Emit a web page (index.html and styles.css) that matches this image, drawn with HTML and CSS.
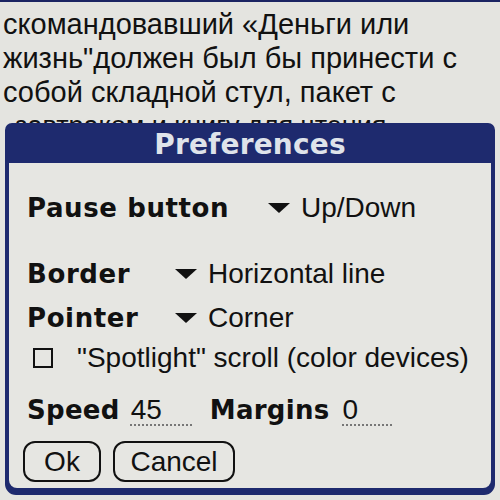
FILE: index.html
```html
<!DOCTYPE html>
<html lang="ru">
<head>
    <meta charset="UTF-8">
    <title>Preferences</title>
    <link rel="stylesheet" href="styles.css">
</head>
<body>

    <div class="reader">
        <p class="line">скомандовавший «Деньги или</p>
        <p class="line">жизнь"должен был бы принести с</p>
        <p class="line">собой складной стул, пакет с</p>
        <p class="line line-hidden">завтраком и книгу для чтения</p>
    </div>

    <div class="dialog">
        <div class="dialog-title">Preferences</div>
        <div class="dialog-body">

            <div class="row row-pause">
                <span class="label label-wide">Pause button</span>
                <span class="trigger"></span>
                <span class="value">Up/Down</span>
            </div>

            <div class="row row-border">
                <span class="label">Border</span>
                <span class="trigger"></span>
                <span class="value">Horizontal line</span>
            </div>

            <div class="row row-pointer">
                <span class="label">Pointer</span>
                <span class="trigger"></span>
                <span class="value">Corner</span>
            </div>

            <div class="row row-check">
                <span class="checkbox"></span>
                <span class="value">"Spotlight" scroll (color devices)</span>
            </div>

            <div class="row row-fields">
                <span class="label">Speed</span>
                <span class="field field-speed">45</span>
                <span class="label label-margins">Margins</span>
                <span class="field field-margins">0</span>
            </div>

            <div class="buttons">
                <button class="btn btn-ok">Ok</button>
                <button class="btn btn-cancel">Cancel</button>
            </div>

        </div>
    </div>

</body>
</html>
```

FILE: styles.css
```css
body {
    margin: 0;
    width: 500px;
    height: 500px;
    overflow: hidden;
    background-color: #e4e4e0;
    border-top: 2px solid #1b2462;
    box-sizing: border-box;
    font-family: "Liberation Sans", Arial, sans-serif;
    color: #111;
}
.reader {
    height: 123px;
    overflow: hidden;
    padding: 5px 0 0 3px;
    box-sizing: border-box;
}
.line {
    margin: 0;
    font-size: 29px;
    line-height: 34px;
    white-space: nowrap;
}
.line-hidden {
    padding-left: 12px;
    font-size: 27px;
}
.dialog {
    position: absolute;
    left: 5px;
    top: 123px;
    width: 490px;
    height: 372px;
    box-sizing: border-box;
    background: #1e2a6e;
    border-radius: 7px 7px 11px 11px;
    padding: 0 4px 7px 4px;
    display: flex;
    flex-direction: column;
}
.dialog-title {
    height: 40px;
    text-align: center;
    font-family: "DejaVu Sans", sans-serif;
    font-weight: bold;
    font-size: 28px;
    line-height: 43px;
    color: #dfe3ea;
    letter-spacing: 0.2px;
}
.dialog-body {
    flex: 1;
    background: #e6e6e2;
    border-radius: 0 0 8px 8px;
    padding: 0 0 0 18px;
}
.row {
    display: flex;
    align-items: center;
    height: 40px;
    white-space: nowrap;
}
.row-pause {
    margin-top: 25px;
}
.row-border {
    margin-top: 26px;
}
.row-pointer {
    margin-top: 4px;
}
.row-check {
    margin-top: 0;
}
.row-fields {
    margin-top: 12px;
}
.label {
    font-family: "DejaVu Sans", sans-serif;
    font-weight: bold;
    font-size: 26px;
    letter-spacing: 0.6px;
    width: 148px;
}
.label-wide {
    width: 241px;
}
.trigger {
    width: 0;
    height: 0;
    border-left: 11px solid transparent;
    border-right: 11px solid transparent;
    border-top: 10px solid #111;
    margin-right: 11px;
}
.value {
    font-size: 28px;
}
.checkbox {
    width: 16px;
    height: 16px;
    border: 2px solid #111;
    margin: 0 24px 0 6px;
}
.row-fields .label {
    width: auto;
    letter-spacing: 0.3px;
}
.field {
    box-sizing: border-box;
    font-size: 28px;
    line-height: 29px;
    padding-left: 1px;
    border-bottom: 2px dotted #777;
}
.field-speed {
    margin-left: 10px;
    width: 62px;
}
.label-margins {
    margin-left: 18px;
}
.field-margins {
    margin-left: 12px;
    width: 50px;
}
.buttons {
    display: flex;
    gap: 12px;
    margin: 11px 0 0 -4px;
}
.btn {
    height: 41px;
    border: 2.5px solid #111;
    border-radius: 12px;
    background: transparent;
    font-family: "Liberation Sans", Arial, sans-serif;
    font-size: 28px;
    color: #111;
    padding: 0;
}
.btn-ok {
    width: 78px;
}
.btn-cancel {
    width: 122px;
}
```
